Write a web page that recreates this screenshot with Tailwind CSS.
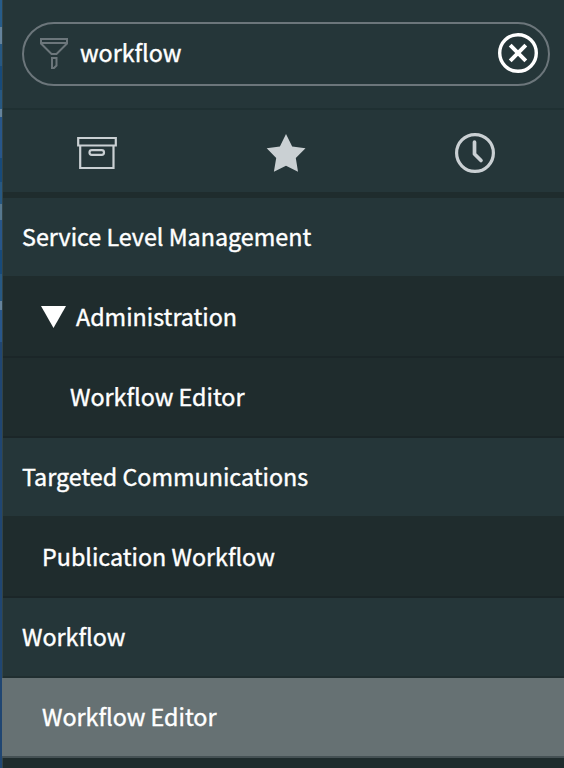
<!DOCTYPE html>
<html lang="en">
<head>
<meta charset="utf-8">
<title>Navigator</title>
<script src="https://cdn.jsdelivr.net/npm/@tailwindcss/browser@4"></script>
</head>
<body class="flex h-[768px] w-[564px] overflow-hidden bg-[#1f2c2d] font-['Noto_Sans_CJK_SC','Noto_Sans',sans-serif] text-[23.3px] leading-[30px] font-normal text-white [-webkit-text-stroke:0.4px_#fff]">
  <div class="flex w-[2px] shrink-0 flex-col bg-[#204672]">
    <div class="h-[27px] bg-[#275c8a]"></div>
    <div class="h-[17px] bg-[#65839c]"></div>
    <div class="h-[22px] bg-[#275882]"></div>
    <div class="h-[24px] bg-[#174a7a]"></div>
    <div class="h-[19px] bg-[#275882]"></div>
    <div class="h-[8px] bg-[#65839c]"></div>
    <div class="h-[41px] bg-[#28568a]"></div>
    <div class="h-[24px] bg-[#174a7a]"></div>
    <div class="h-[22px] bg-[#275882]"></div>
    <div class="h-[16px] bg-[#57788f]"></div>
    <div class="h-[30px] bg-[#28568a]"></div>
    <div class="h-[24px] bg-[#174a7a]"></div>
    <div class="h-[27px] bg-[#275882]"></div>
    <div class="h-[9px] bg-[#65839c]"></div>
    <div class="h-[32px] bg-[#28568a]"></div>
  </div>
  <nav class="flex flex-1 flex-col border-l border-[#334447]">
    <header class="h-[110px] border-b-2 border-[#1f3032] bg-[#253639] pt-[22px] pr-[14px] pl-[19px]">
      <div class="flex h-[64px] items-center rounded-full border-2 border-[#6c767b] pr-[10px] pl-[15px]">
        <svg class="h-[34px] w-[30px]" viewBox="0 0 30 34" fill="none" stroke="#6c767b" stroke-width="2">
          <path d="M2 2H28V6.500L17.500 17H12.500L2 6.500ZM2 6H28M13 21H17.500V28.500L15 31H13Z"/>
        </svg>
        <span class="ml-[11px] flex-1 pb-[4px]">workflow</span>
        <svg class="-mt-[2px] h-[40px] w-[40px]" viewBox="0 0 40 40" fill="none" stroke="#fff">
          <circle cx="20" cy="20" r="18.300" stroke-width="3.400"/>
          <path d="M12.200 12.200L27.800 27.800M27.800 12.200L12.200 27.800" stroke-width="4"/>
        </svg>
      </div>
    </header>
    <div class="grid h-[88px] grid-cols-[189px_189px_183px] border-b-6 border-[#1f2c2d] bg-[#253639]">
      <div class="pt-[26px] pl-[74px]">
        <svg class="h-[34px] w-[40px]" viewBox="0 0 40 34" fill="none" stroke="#cad0d3" stroke-width="2.200">
          <path d="M1.200 2H38.800V9.500H1.200ZM3.200 9.500V32H36.500V9.500"/>
          <rect x="12.500" y="14.200" width="14.500" height="4.600" rx="2.300"/>
        </svg>
      </div>
      <div class="pt-[24px] pl-[74px]">
        <svg class="h-[38px] w-[40px]" viewBox="0 0 40 38" fill="#cad0d3">
          <path d="M20 0L26.200 12.500L39.500 14.300L29.800 24L32 37.800L20 31.800L7.900 37.800L10.200 24L.7 14.300L13.900 12.500Z"/>
        </svg>
      </div>
      <div class="pt-[23px] pl-[74px]">
        <svg class="h-[40px] w-[40px]" viewBox="0 0 40 40" fill="none" stroke="#cad0d3">
          <circle cx="20" cy="20" r="18.400" stroke-width="3.200"/>
          <path d="M19.500 9V21L26 27.500" stroke-width="3.700" stroke-linecap="round" stroke-linejoin="round"/>
        </svg>
      </div>
    </div>
    <div class="flex h-[78px] items-center bg-[#253639] pb-[2px] pl-[19px]">Service Level Management</div>
    <div class="flex h-[82px] items-center border-b-2 border-[#1b2628] bg-[#1f2c2d] pl-[38px]">
      <svg class="mt-[1px] mr-[10px] h-[22px] w-[25px]" viewBox="0 0 25 22" fill="#fff"><path d="M0 0H25L12.500 22Z"/></svg>
      Administration
    </div>
    <div class="flex h-[80px] items-center border-b-2 border-[#1b2628] bg-[#1f2c2d] pb-[2px] pl-[67px]">Workflow Editor</div>
    <div class="flex h-[78px] items-center bg-[#253639] pb-[2px] pl-[19px]">Targeted Communications</div>
    <div class="flex h-[82px] items-center border-b-2 border-[#1b2628] bg-[#1f2c2d] pl-[39px]">Publication Workflow</div>
    <div class="flex h-[80px] items-center border-b-2 border-[#202e30] bg-[#253639] pb-[2px] pl-[19px]">Workflow</div>
    <div class="-ml-px flex h-[80px] items-center border-b-2 border-[#455154] bg-[#667173] pb-[2px] pl-[40px]">Workflow Editor</div>
  </nav>
</body>
</html>
